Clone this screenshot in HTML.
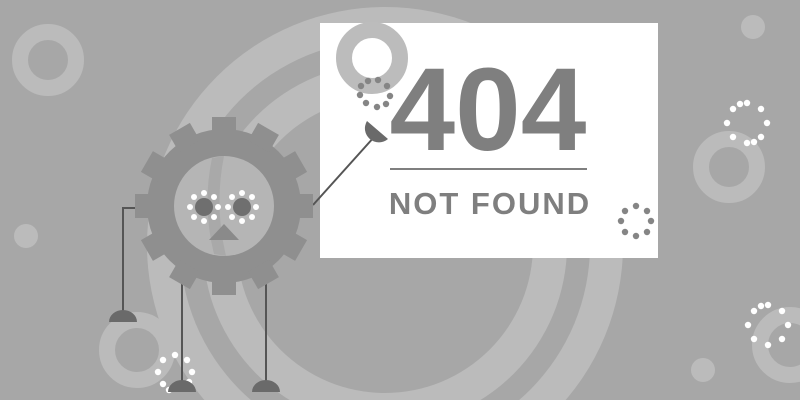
<!DOCTYPE html>
<html><head><style>html,body{margin:0;padding:0;overflow:hidden;width:800px;height:400px}svg{display:block}</style></head>
<body>
<svg width="800" height="400" viewBox="0 0 800 400" xmlns="http://www.w3.org/2000/svg">
<rect width="800" height="400" fill="#a7a7a7"/>
<circle cx="385" cy="245" r="238" fill="#bbbbbb"/>
<circle cx="385" cy="245" r="205" fill="#a7a7a7"/>
<circle cx="385" cy="245" r="182" fill="#bbbbbb"/>
<circle cx="385" cy="245" r="148" fill="#a7a7a7"/>
<circle cx="48" cy="60" r="28" fill="none" stroke="#bbbbbb" stroke-width="16"/>
<circle cx="26" cy="236" r="12" fill="#bbbbbb"/>
<circle cx="137" cy="350" r="30" fill="none" stroke="#bbbbbb" stroke-width="16"/>
<circle cx="753" cy="27" r="12" fill="#bbbbbb"/>
<circle cx="729" cy="167" r="28" fill="none" stroke="#bbbbbb" stroke-width="16"/>
<circle cx="790" cy="345" r="30" fill="none" stroke="#bbbbbb" stroke-width="16"/>
<circle cx="703" cy="370" r="12" fill="#bbbbbb"/>
<g fill="#fff">
<g transform="translate(747,123)"><circle cx="20" cy="0" r="3.2"/><circle cx="14" cy="14" r="3.2"/><circle cx="0" cy="20" r="3.2"/><circle cx="-14" cy="14" r="3.2"/><circle cx="-20" cy="0" r="3.2"/><circle cx="-14" cy="-14" r="3.2"/><circle cx="0" cy="-20" r="3.2"/><circle cx="14" cy="-14" r="3.2"/><circle cx="7" cy="19" r="3.2"/><circle cx="-7" cy="-19" r="3.2"/></g>
<g transform="translate(768,325)"><circle cx="20" cy="0" r="3.2"/><circle cx="14" cy="14" r="3.2"/><circle cx="0" cy="20" r="3.2"/><circle cx="-14" cy="14" r="3.2"/><circle cx="-20" cy="0" r="3.2"/><circle cx="-14" cy="-14" r="3.2"/><circle cx="0" cy="-20" r="3.2"/><circle cx="14" cy="-14" r="3.2"/><circle cx="-7" cy="-19" r="3.2"/></g>
<g transform="translate(175,372)"><circle cx="17" cy="0" r="3.2"/><circle cx="12" cy="-12" r="3.2"/><circle cx="-17" cy="0" r="3.2"/><circle cx="-12" cy="-12" r="3.2"/><circle cx="0" cy="-17" r="3.2"/><circle cx="-12" cy="12" r="3.2"/><circle cx="14" cy="10" r="3.2"/><circle cx="-6" cy="18" r="3.2"/></g>
</g>
<rect x="320" y="23" width="338" height="235" fill="#fff"/>
<circle cx="372" cy="58" r="28" fill="none" stroke="#bcbcbc" stroke-width="16"/>
<g fill="#858585">
<g transform="translate(377,92)"><circle cx="-9" cy="-11" r="3.2"/><circle cx="1" cy="-12" r="3.2"/><circle cx="10" cy="-6" r="3.2"/><circle cx="13" cy="4" r="3.2"/><circle cx="9" cy="12" r="3.2"/><circle cx="0" cy="15" r="3.2"/><circle cx="-11" cy="11" r="3.2"/><circle cx="-17" cy="3" r="3.2"/><circle cx="-16" cy="-6" r="3.2"/></g>
<g transform="translate(636,221)"><circle cx="0" cy="-15" r="3.2"/><circle cx="11" cy="-10" r="3.2"/><circle cx="15" cy="0" r="3.2"/><circle cx="11" cy="11" r="3.2"/><circle cx="0" cy="15" r="3.2"/><circle cx="-11" cy="11" r="3.2"/><circle cx="-15" cy="0" r="3.2"/><circle cx="-11" cy="-10" r="3.2"/></g>
</g>
<text x="488" y="150" text-anchor="middle" font-family="Liberation Sans, sans-serif" font-weight="bold" font-size="118" fill="#7f7f7f">404</text>
<rect x="390" y="168" width="197" height="2" fill="#7f7f7f"/>
<text x="490" y="214" text-anchor="middle" font-family="Liberation Sans, sans-serif" font-weight="bold" font-size="31" letter-spacing="2" fill="#7f7f7f">NOT  FOUND</text>
<line x1="313" y1="205" x2="375" y2="136" stroke="#555" stroke-width="2"/>
<path d="M367 121 A14 14 0 0 0 388 139 Z" fill="#6a6a6a"/>
<g stroke="#555" stroke-width="2" fill="none">
<polyline points="138,208 123,208 123,312"/>
<line x1="182" y1="280" x2="182" y2="384"/>
<line x1="266" y1="280" x2="266" y2="384"/>
</g>
<g fill="#6a6a6a">
<path d="M109 322 A14 12 0 0 1 137 322 Z"/>
<path d="M168 392 A14 12 0 0 1 196 392 Z"/>
<path d="M252 392 A14 12 0 0 1 280 392 Z"/>
</g>
<g transform="translate(224,206)" fill="#8f8f8f">
<circle r="77"/>
<g id="t"><rect x="-12" y="-89" width="24" height="20"/></g>
<use href="#t" transform="rotate(30)"/><use href="#t" transform="rotate(60)"/><use href="#t" transform="rotate(90)"/>
<use href="#t" transform="rotate(120)"/><use href="#t" transform="rotate(150)"/><use href="#t" transform="rotate(180)"/>
<use href="#t" transform="rotate(210)"/><use href="#t" transform="rotate(240)"/><use href="#t" transform="rotate(270)"/>
<use href="#t" transform="rotate(300)"/><use href="#t" transform="rotate(330)"/>
<circle r="50" fill="#b5b5b5"/>
<path d="M-12 -48 Q-22 0 -10 48 L2 50 Q-10 0 0 -50 Z" fill="#a9a9a9"/>
<circle cx="-20" cy="1" r="9" fill="#6f6f6f"/>
<circle cx="18" cy="1" r="9" fill="#6f6f6f"/>
<path d="M-15 34 L15 34 L0 18 Z" fill="#8a8a8a"/>
<g fill="#fff">
<g transform="translate(-20,1)"><circle cx="0" cy="-14" r="3"/><circle cx="10" cy="-10" r="3"/><circle cx="14" cy="0" r="3"/><circle cx="10" cy="10" r="3"/><circle cx="0" cy="14" r="3"/><circle cx="-10" cy="10" r="3"/><circle cx="-14" cy="0" r="3"/><circle cx="-10" cy="-10" r="3"/></g>
<g transform="translate(18,1)"><circle cx="0" cy="-14" r="3"/><circle cx="10" cy="-10" r="3"/><circle cx="14" cy="0" r="3"/><circle cx="10" cy="10" r="3"/><circle cx="0" cy="14" r="3"/><circle cx="-10" cy="10" r="3"/><circle cx="-14" cy="0" r="3"/><circle cx="-10" cy="-10" r="3"/></g>
</g>
</g>
</svg>
</body></html>
